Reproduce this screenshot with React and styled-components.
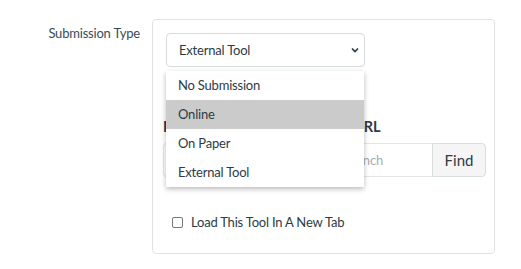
import React from 'react';
import styled, { createGlobalStyle } from 'styled-components';

const Global = createGlobalStyle`
  body {
    margin: 0;
    background: #fff;
    font-family: Lato, "Open Sans", sans-serif;
    color: #2d3b45;
  }
`;

const Page = styled.div`
  display: flex;
  align-items: flex-start;
  padding-top: 19px;
`;

const FieldLabel = styled.div`
  width: 140px;
  text-align: right;
  padding-top: 4px;
  margin-right: 12px;
  font-size: 13px;
  letter-spacing: -0.2px;
  line-height: 20px;
  color: #394b58;
`;

const Panel = styled.div`
  width: 343px;
  box-sizing: border-box;
  border: 1px solid #dfe3e6;
  border-radius: 4px;
  padding: 13px 8px 23px 10px;
`;

const SelectWrap = styled.div`
  position: relative;
  width: 199px;
  margin-left: 3px;
`;

const SelectBox = styled.div`
  height: 34px;
  box-sizing: border-box;
  border: 1px solid #d5dadd;
  border-radius: 4px;
  display: flex;
  align-items: center;
  justify-content: space-between;
  padding: 0 5px 0 12px;
  font-size: 13px;
  letter-spacing: -0.2px;
  color: #2d3b45;
`;

const Menu = styled.ul`
  position: absolute;
  top: 38px;
  left: 0;
  width: 198px;
  margin: 0;
  padding: 0;
  list-style: none;
  background: #fff;
  box-shadow: 0 2px 5px rgba(0, 0, 0, 0.28);
  z-index: 2;
`;

const MenuItem = styled.li`
  height: 29px;
  line-height: 29px;
  padding-left: 12px;
  font-size: 13px;
  letter-spacing: -0.2px;
  color: #2d3b45;
  background: ${p => (p.$active ? '#cbcbcb' : '#fff')};
`;

const Heading = styled.div`
  margin-top: 50px;
  font-size: 14.5px;
  font-weight: 700;
  line-height: 20px;
  color: #2d3b45;
`;

const InputRow = styled.div`
  display: flex;
  margin-top: 6px;
  height: 34px;
`;

const TextInput = styled.div`
  width: 269px;
  box-sizing: border-box;
  border: 1px solid #e3e6e8;
  border-right: none;
  border-radius: 4px 0 0 4px;
  padding-left: 12px;
  display: flex;
  align-items: center;
  font-size: 13px;
  letter-spacing: -0.2px;
  color: #a3acb2;
  white-space: nowrap;
  overflow: hidden;
`;

const FindButton = styled.div`
  width: 54px;
  box-sizing: border-box;
  border: 1px solid #d8dde0;
  border-radius: 0 4px 4px 0;
  background: #f5f5f5;
  display: flex;
  align-items: center;
  justify-content: center;
  font-size: 15px;
  color: #2d3b45;
`;

const CheckRow = styled.label`
  display: flex;
  align-items: center;
  gap: 8px;
  margin-top: 37px;
  margin-left: 9px;
  font-size: 13px;
  letter-spacing: -0.2px;
  color: #2d3b45;
`;

const Box = styled.span`
  width: 11px;
  height: 11px;
  box-sizing: border-box;
  border: 1px solid #767676;
  border-radius: 2px;
  background: #fff;
`;

const Chevron = () => (
  <svg width="8" height="6" viewBox="0 0 8 6">
    <path d="M1 1.5 L4 4.5 L7 1.5" fill="none" stroke="#2d3b45" strokeWidth="1.7" />
  </svg>
);

const options = ['No Submission', 'Online', 'On Paper', 'External Tool'];

export default function App() {
  return (
    <>
      <Global />
      <Page>
        <FieldLabel>Submission Type</FieldLabel>
        <Panel>
          <SelectWrap>
            <SelectBox>
              External Tool
              <Chevron />
            </SelectBox>
            <Menu>
              {options.map(o => (
                <MenuItem key={o} $active={o === 'Online'}>{o}</MenuItem>
              ))}
            </Menu>
          </SelectWrap>
          <Heading>Enter or find an External Tool URL</Heading>
          <InputRow>
            <TextInput>Enter URL or search for tool to launch</TextInput>
            <FindButton>Find</FindButton>
          </InputRow>
          <CheckRow>
            <Box />
            Load This Tool In A New Tab
          </CheckRow>
        </Panel>
      </Page>
    </>
  );
}
